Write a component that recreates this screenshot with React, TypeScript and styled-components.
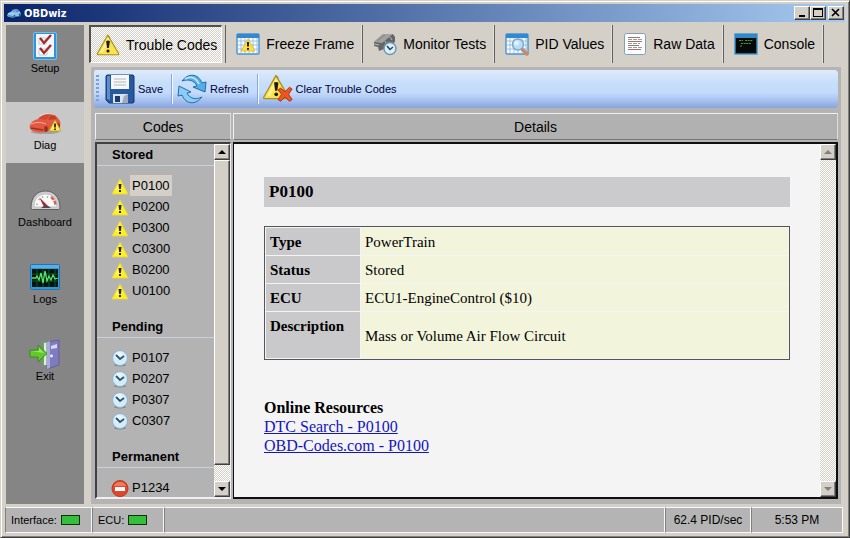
import React from "react";
import styled, { createGlobalStyle, css } from "styled-components";

const GlobalStyle = createGlobalStyle`
  * { box-sizing: border-box; }
  body { margin: 0; background: #d4d0c8; }
  button { font: inherit; color: inherit; margin: 0; padding: 0; border: 0; background: none; border-radius: 0; }
  svg { display: block; flex: none; }
`;

const checker = css`
  background-color: #ffffff;
  background-image: conic-gradient(#d4d0c8 25%, transparent 0 50%, #d4d0c8 0 75%, transparent 0);
  background-size: 2px 2px;
`;

const raised = css`
  background: #d4d0c8;
  border: 1px solid;
  border-color: #ffffff #404040 #404040 #ffffff;
  box-shadow: inset -1px -1px 0 #808080;
`;

const Window = styled.div`
  display: flex;
  flex-direction: column;
  height: 100vh;
  background: #d4d0c8;
  border: 1px solid;
  border-color: #d4d0c8 #404040 #404040 #d4d0c8;
  box-shadow: inset 1px 1px 0 #ffffff, inset -1px -1px 0 #808080;
  padding: 3px 4px 4px 3px;
  font-family: "Liberation Sans", Arial, sans-serif;
  font-size: 11px;
  color: #000000;
`;

const TitleBar = styled.header`
  display: flex;
  align-items: center;
  flex: none;
  height: 18px;
  padding: 0 1px 0 3px;
  gap: 3px;
  background: linear-gradient(90deg, #0a246a, #a6caf0);
  color: #ffffff;
`;

const WindowTitle = styled.h1`
  flex: 1;
  margin: 0;
  font: bold 11px "DejaVu Sans Condensed", "Liberation Sans", sans-serif;
`;

const CaptionButton = styled.button<{ $apart?: boolean }>`
  ${raised}
  width: 16px;
  height: 14px;
  margin-left: ${(p) => (p.$apart ? 2 : 0)}px;
`;

const CaptionGroup = styled.div`
  display: flex;
`;

const Body = styled.div`
  display: flex;
  flex: 1;
  min-height: 0;
  padding: 3px 0 3px 2px;
`;

const Sidebar = styled.nav`
  display: flex;
  flex-direction: column;
  gap: 16px;
  flex: none;
  width: 78px;
  background: #858585;
`;

const SideItem = styled.button<{ $active?: boolean }>`
  display: flex;
  flex-direction: column;
  align-items: center;
  height: 61px;
  padding-top: 5px;
  line-height: 12px;
  background: ${(p) => (p.$active ? "#c8c8c8" : "transparent")};
`;

const Main = styled.main`
  display: flex;
  flex-direction: column;
  flex: 1;
  min-width: 0;
  padding-left: 5px;
`;

const TabBar = styled.nav`
  display: flex;
  flex: none;
  height: 38px;
`;

const Tab = styled.button<{ $active?: boolean }>`
  display: flex;
  align-items: center;
  gap: 6px;
  padding: 0 8px 0 10px;
  font-size: 14px;
  white-space: nowrap;
  border-right: 1px solid #606060;
  box-shadow: inset -1px 0 0 #e4e2de;
  ${(p) =>
    p.$active &&
    css`
      ${checker}
      padding: 0 4px 0 5px;
      margin-right: 3px;
      border: 1px solid;
      border-width: 2px 1px 1px 2px;
      border-color: #505050 #ffffff #ffffff #505050;
      box-shadow: none;
    `}
`;

const TabDivider = styled.span`
  flex: none;
  width: 1px;
  background: #606060;
`;

const Workspace = styled.section`
  display: flex;
  flex-direction: column;
  flex: 1;
  min-height: 0;
  margin: 4px 4px 0 2px;
  padding: 3px 3px 5px;
  gap: 5px;
  background: #b5b4b4;
`;

const Toolbar = styled.div`
  display: flex;
  align-items: center;
  flex: none;
  height: 38px;
  padding: 0 2px;
  border-radius: 2px 4px 4px 2px;
  background: linear-gradient(#dfebfb, #c8dffa 30%, #c3dafa 60%, #aac4f2 78%, #88a4dc);
`;

const Grip = styled.span`
  width: 3px;
  height: 28px;
  margin-right: 6px;
  background: repeating-linear-gradient(#7f9fd6 0 2px, transparent 2px 4px);
`;

const ToolButton = styled.button`
  display: flex;
  align-items: center;
  gap: 3px;
  height: 32px;
  color: #000040;
`;

const ToolSeparator = styled.span`
  width: 2px;
  height: 30px;
  margin: 0 4px 0 8px;
  background: linear-gradient(90deg, #8aa8dc 50%, #f4f8ff 50%);
`;

const Columns = styled.div`
  display: grid;
  grid-template-columns: 136px minmax(0, 1fr);
  grid-template-rows: 27px minmax(0, 1fr);
  gap: 2px;
  flex: 1;
  min-height: 0;
  padding-left: 1px;
`;

const ColumnTitle = styled.h2`
  margin: 0;
  font-size: 14px;
  font-weight: normal;
  line-height: 26px;
  text-align: center;
  background: #b2b1b1;
  border: 1px solid;
  border-color: #f0f0f0 #dddddd #777777 #f0f0f0;
`;

const Pane = styled.div<{ $light?: boolean }>`
  display: flex;
  min-height: 0;
  overflow: hidden;
  background: ${(p) => (p.$light ? "#f4f4f4" : "#b3b3b3")};
  border: 2px solid;
  border-color: ${(p) => (p.$light ? "#101010" : "#404040 #f0f0f0 #f0f0f0 #404040")};
  border-width: ${(p) => (p.$light ? "2px 2px 2px 1px" : "2px 1px 2px 2px")};
`;

const PaneContent = styled.div`
  flex: 1;
  min-width: 0;
  overflow: hidden;
`;

const Group = styled.section`
  margin-bottom: 15px;
  font-size: 13px;
`;

const GroupTitle = styled.h3`
  margin: 0 0 9px;
  padding-left: 15px;
  height: 22px;
  font-size: 13px;
  line-height: 21px;
  border-bottom: 1px solid #ccd0dc;
`;

const CodeList = styled.ul`
  list-style: none;
  margin: 0;
  padding: 0 0 0 14px;
`;

const CodeRow = styled.li`
  height: 21px;
`;

const CodeButton = styled.button<{ $selected?: boolean }>`
  display: flex;
  align-items: center;
  gap: 1px;
  height: 21px;

  span {
    padding: 0 2px;
    line-height: 21px;
    background: ${(p) => (p.$selected ? "#d4d0c8" : "transparent")};
  }
`;

const ScrollTrack = styled.div`
  ${checker}
  display: flex;
  flex-direction: column;
  justify-content: space-between;
  flex: none;
  width: 16px;
`;

const ScrollButton = styled.button`
  ${raised}
  display: grid;
  place-items: center;
  flex: none;
  width: 16px;
  height: 16px;
`;

const ScrollThumb = styled.div`
  ${raised}
  flex: 1;
  margin-bottom: 16px;
`;

const Document = styled.article`
  padding: 33px 30px 0 30px;
  font: 15px/19px "Liberation Serif", "Times New Roman", serif;
`;

const CodeHeading = styled.h2`
  margin: 0;
  padding-left: 5px;
  font-size: 17px;
  line-height: 30px;
  background: #cbcbcd;
`;

const FactTable = styled.table`
  width: 100%;
  margin: 19px 0 38px;
  border: 1px solid #555555;
  border-spacing: 1px;

  th, td {
    height: 27px;
    padding: 5px 4px 3px;
    text-align: left;
  }
  th {
    width: 94px;
    vertical-align: top;
    background: #c9c9cb;
  }
  td { background: #f3f4dc; }
  tr:last-child td { height: 46px; }
`;

const Resources = styled.section`
  font-size: 16px;

  h3 { margin: 0; font-size: 16px; }
  a { display: table; color: #1414c0; }
`;

const StatusBar = styled.footer`
  display: flex;
  flex: none;
  height: 26px;
  padding: 0 2px 0 1px;
`;

const StatusCell = styled.div<{ $width?: number; $centered?: boolean }>`
  display: flex;
  align-items: center;
  justify-content: ${(p) => (p.$centered ? "center" : "flex-start")};
  gap: 4px;
  flex: ${(p) => (p.$width ? `0 0 ${p.$width}px` : "1")};
  padding: 0 5px;
  font-size: ${(p) => (p.$centered ? 12 : 11)}px;
  background: #b5b4b4;
  border: 1px solid;
  border-color: #f8f8f8 #f8f8f8 #f8f8f8 #808080;
`;

const Led = styled.span`
  width: 19px;
  height: 10px;
  border: 1px solid #103010;
  background: #35bd3c;
`;

const CarShape = ({ body, dark }: { body: string; dark: string }) => (
  <>
    <ellipse cx="16" cy="25" rx="14" ry="2" fill="#000" opacity=".2" />
    <path d="M1 18c1-3 4-5 8-6 3-4 8-6 14-5 4 1 6 4 8 7 1 3 0 6-1 8l-8 1-6 2c-5 1-10 0-14-2-1-1-2-3-1-5z" fill={body} />
    <path d="M9 12c3-3 7-5 12-4l-4 5c-3-1-6-1-8-1z" fill={dark} opacity=".35" />
    <path d="M22 8c3 0 5 2 6 4l-9 1z" fill={dark} opacity=".6" />
    <path d="M11 9c4-3 9-3 14-1" stroke="#fff" strokeOpacity=".45" fill="none" />
    <path d="M2 17c5-2 10-2 15 0" stroke="#fff" strokeOpacity=".5" fill="none" />
    <path d="M2 21l12 2" stroke={dark} strokeWidth="1.500" />
    <ellipse cx="17" cy="22" rx="2" ry="3" fill={dark} />
    <ellipse cx="29" cy="19" rx="2" ry="3" fill={dark} />
  </>
);

const LogoIcon = () => (
  <svg width="14" height="13" viewBox="0 4 32 24">
    <CarShape body="#8fc4f0" dark="#21578f" />
  </svg>
);

const TriangleShape = () => (
  <>
    <path d="M16 3.500L30 27q1 2-1 2H3q-2 0-1-2L15 4q1-1.500 2 0z" fill="#fbe44a" stroke="#a98e28" strokeWidth="1.500" />
    <path d="M16 6L5 26h4L18 9z" fill="#fff" opacity=".4" />
    <path d="M13.500 11q2.500-2 5 0l-1.300 9h-2.400z" fill="#221c05" />
    <circle cx="16" cy="24" r="2.100" fill="#221c05" />
  </>
);

const WarningIcon = () => (
  <svg width="24" height="24" viewBox="0 0 32 32">
    <TriangleShape />
  </svg>
);

const SmallWarningIcon = () => (
  <svg width="18" height="18" viewBox="0 0 18 18">
    <path d="M9 2l8 15H1z" fill="#fff21c" stroke="#e5d44c" strokeWidth="1" strokeLinejoin="round" />
    <path d="M9 4l-5 9h4z" fill="#fff" opacity=".35" />
    <path d="M7.500 7h3l-.6 5H8.100z" fill="#2c2606" />
    <rect x="8" y="13" width="2" height="2" fill="#2c2606" />
  </svg>
);

const ClockIcon = () => (
  <svg width="18" height="18" viewBox="0 0 18 18">
    <ellipse cx="9" cy="16" rx="6" ry="1.500" fill="#7b8790" />
    <circle cx="9" cy="9" r="7.500" fill="#d4ebf8" stroke="#91b3ca" />
    <circle cx="8" cy="7" r="4" fill="#fff" opacity=".5" />
    <path d="M5 6l4 4 4-3" fill="none" stroke="#2a5470" strokeWidth="1.800" />
  </svg>
);

const StopIcon = () => (
  <svg width="18" height="18" viewBox="0 0 18 18">
    <circle cx="9" cy="9.500" r="8" fill="#e2472a" stroke="#b9381f" />
    <path d="M3 7a6.500 6.500 0 0 1 12 0z" fill="#ff9d80" opacity=".6" />
    <rect x="4" y="8" width="10" height="4" fill="#fff" />
  </svg>
);

const SetupIcon = () => (
  <svg width="32" height="32" viewBox="0 0 32 32">
    <rect x="4.500" y="2.500" width="23" height="27" rx="1.500" fill="#2f95d6" stroke="#77bce8" />
    <rect x="7" y="4" width="18" height="23" fill="#f3f6fa" />
    <path d="M10 19h8v6h-8zM10 8h7v6h-7z" fill="#fff" stroke="#c3cad2" />
    <path d="M11 8l4 5 7-8M11 18l4 5 7-8" fill="none" stroke="#a52a2a" strokeWidth="2.400" />
  </svg>
);

const DiagIcon = () => (
  <svg width="32" height="32" viewBox="0 0 32 32">
    <CarShape body="#e5573e" dark="#9c3322" />
    <path d="M26 13l6 11H20z" fill="#ffec4a" stroke="#b89d28" strokeWidth=".8" />
    <path d="M26 16.500v4M26 21.500v1.500" stroke="#2b2100" strokeWidth="1.800" />
  </svg>
);

const GaugeIcon = () => (
  <svg width="32" height="32" viewBox="0 0 32 32">
    <path d="M2 24C2 13 8 7 16.500 7S31 13 31 24q0 1.500-1.500 1.500h-26Q2 25.500 2 24z" fill="#cfcfcf" stroke="#5d5d5d" />
    <path d="M5 23c0-9 5-13 11.500-13S28 14 28 23z" fill="#fafafa" stroke="#c1c1c1" />
    <path d="M7 20l2 .5M9 15l2 1M13 12l1 2M19 12l-1 2" stroke="#999" />
    <path d="M22 13q4 3 4.500 8" stroke="#d06452" strokeWidth="2.500" fill="none" strokeDasharray="4 1" />
    <path d="M10 13l10 10h-5z" fill="#b22430" />
    <path d="M12 24q5-5 10 0z" fill="#4b4b55" />
  </svg>
);

const LogsIcon = () => (
  <svg width="32" height="32" viewBox="0 0 32 32">
    <rect x="1.500" y="3.500" width="29" height="25" rx="1" fill="#3495d8" stroke="#1e74b5" />
    <rect x="2" y="4" width="28" height="3" fill="#56b1ea" />
    <rect x="3" y="8" width="26" height="18" fill="#03140a" />
    <path d="M3 13h26M3 20h26M8 8v18M14 8v18M20 8v18M26 8v18" stroke="#12562a" />
    <path d="M3 17h4l1-2 2 4 2-7 2 10 2-12 2 10 2-5 2 4 2-5 2 4 3-1" fill="none" stroke="#53e56b" strokeWidth="1.300" />
  </svg>
);

const ExitIcon = () => (
  <svg width="32" height="32" viewBox="0 0 32 32">
    <path d="M13 3l16-1v25l-16 1z" fill="#6f9a7c" />
    <path d="M15 5l6-1v23h-6z" fill="#d8f5c8" />
    <path d="M18 4l12-2v25l-12 4z" fill="#7f7bc0" stroke="#5b5798" strokeWidth=".8" />
    <path d="M18 4l3-1v27l-3 1z" fill="#aaa8da" />
    <path d="M22 8l6-2v4l-6 1z" fill="#d8d9f0" />
    <circle cx="22.500" cy="18" r="1.400" fill="#f3f3fa" />
    <path d="M1 12h8V7l9 8.500L9 24v-5H1z" fill="#62c92c" stroke="#388e16" />
    <path d="M2 13h8v-3l5 5z" fill="#b8f088" opacity=".7" />
  </svg>
);

const CalendarShape = () => (
  <>
    <rect x="1" y="2" width="22" height="20" rx="1" fill="#f7fbff" stroke="#4a93cf" strokeWidth="1.400" />
    <rect x="1" y="2" width="22" height="4" fill="#3289cf" />
    <path d="M5 6v15M9 6v15M13 6v15M17 6v15M21 6v15M2 9h20M2 13h20M2 17h20" stroke="#8ab8de" strokeWidth=".8" />
  </>
);

const FreezeIcon = () => (
  <svg width="24" height="24" viewBox="0 0 24 24">
    <CalendarShape />
    <path d="M12 7l7 12H5z" fill="#ffe03e" stroke="#d5b52b" strokeWidth=".8" />
    <path d="M12 10v4.500M12 16v1.800" stroke="#282006" strokeWidth="2" />
  </svg>
);

const MonitorIcon = () => (
  <svg width="24" height="24" viewBox="0 0 24 24">
    <path d="M1 10L10 2h10l2 3v5L11 17l-5 2-1-4-4-1z" fill="#666" />
    <path d="M1 10L10 2h10L9 11z" fill="#a2a2a2" />
    <path d="M4 9l8-6" stroke="#858585" />
    <path d="M1 12l5 1M12 9l2 4M17 5l2 3" stroke="#b9b9b9" />
    <circle cx="17" cy="16.500" r="6" fill="#deeff8" stroke="#6c94ad" strokeWidth="1.400" />
    <path d="M14 14l3 3.500 3-2.500" fill="none" stroke="#23485f" strokeWidth="1.600" />
  </svg>
);

const PidIcon = () => (
  <svg width="24" height="24" viewBox="0 0 24 24">
    <CalendarShape />
    <path d="M17 17l5 5" stroke="#c98962" strokeWidth="3.500" strokeLinecap="round" />
    <circle cx="13" cy="12.500" r="5.500" fill="#b8ddf6" stroke="#7ba7c8" strokeWidth="1.400" />
    <circle cx="11.500" cy="11" r="2.500" fill="#fff" opacity=".6" />
  </svg>
);

const RawIcon = () => (
  <svg width="24" height="24" viewBox="0 0 24 24">
    <rect x="1.500" y="1.500" width="21" height="21" rx="2" fill="#fdfdfd" stroke="#7fa0bd" />
    <path d="M5 5.500h12M5 9.500h14M5 13.500h11M5 17.500h13" stroke="#a07468" />
    <path d="M5 7.500h14M5 11.500h12M5 15.500h14" stroke="#9a9aa0" strokeDasharray="4 1" />
  </svg>
);

const ConsoleIcon = () => (
  <svg width="24" height="24" viewBox="0 0 24 24">
    <rect x="1" y="2" width="22" height="20" fill="#050a08" stroke="#3a94cf" strokeWidth="1.400" />
    <rect x="1" y="2" width="22" height="4" fill="#3189c8" />
    <path d="M5 8.500h4M11 8.500h8M7 11.500h10M6 14h2" stroke="#469a3d" strokeWidth="1.200" strokeDasharray="2 .6" />
  </svg>
);

const SaveIcon = () => (
  <svg width="30" height="30" viewBox="0 0 30 30">
    <path d="M2 1h26l1 1v26l-1 1H4l-3-3V2z" fill="#28589e" stroke="#153968" />
    <path d="M2 2h3v24l-3-1z" fill="#5c8dcc" />
    <path d="M6 1h18v14H6z" fill="#f5f7f8" />
    <path d="M9 5h12M9 8h12M9 11h12" stroke="#b2b8bd" />
    <path d="M8 20h15v9H8z" fill="#d9e3ee" />
    <path d="M10 22h5v6h-5z" fill="#173c70" />
    <path d="M19 22l4-2v9h-6z" fill="#9cabc0" />
  </svg>
);

const RefreshIcon = () => (
  <svg width="30" height="30" viewBox="0 0 30 30" strokeLinejoin="round">
    <path d="M5 7C11-1 21-1 25 9l4-1-1 10-12-5 4-1C17 6 11 5 5 7z" fill="#56aee8" stroke="#2369ad" />
    <path d="M25 23C19 31 9 31 5 21l-4 1 1-10 12 6-4 1c3 6 9 7 15 4z" fill="#8ccdf4" stroke="#2369ad" />
    <path d="M8 5q9-5 14 5" fill="none" stroke="#c8eafd" strokeWidth="1.500" />
  </svg>
);

const ClearIcon = () => (
  <svg width="30" height="30" viewBox="0 0 34 32">
    <g transform="translate(-1 -2)">
      <TriangleShape />
    </g>
    <path d="M20 15l5 4 5-5 3 2-4 6 4 6-3 2-5-5-5 5-3-2 4-6-4-5z" fill="#ef5422" stroke="#a52c0c" />
  </svg>
);

const Arrow = ({ down, dim }: { down?: boolean; dim?: boolean }) => (
  <svg width="8" height="4" viewBox="0 0 8 4">
    <path d={down ? "M0 0h8L4 4z" : "M0 4h8L4 0z"} fill={dim ? "#808080" : "#000"} />
  </svg>
);

const ScrollBar = ({ active, name }: { active?: boolean; name: string }) => (
  <ScrollTrack>
    <ScrollButton aria-label={`Scroll ${name} up`} disabled={!active}>
      <Arrow dim={!active} />
    </ScrollButton>
    {active && <ScrollThumb />}
    <ScrollButton aria-label={`Scroll ${name} down`} disabled={!active}>
      <Arrow down dim={!active} />
    </ScrollButton>
  </ScrollTrack>
);

const sideItems = [
  { label: "Setup", icon: <SetupIcon /> },
  { label: "Diag", icon: <DiagIcon />, active: true },
  { label: "Dashboard", icon: <GaugeIcon /> },
  { label: "Logs", icon: <LogsIcon /> },
  { label: "Exit", icon: <ExitIcon /> },
];

const tabs = [
  { label: "Freeze Frame", icon: <FreezeIcon /> },
  { label: "Monitor Tests", icon: <MonitorIcon /> },
  { label: "PID Values", icon: <PidIcon /> },
  { label: "Raw Data", icon: <RawIcon /> },
  { label: "Console", icon: <ConsoleIcon /> },
];

const groups = [
  { title: "Stored", icon: <SmallWarningIcon />, codes: ["P0100", "P0200", "P0300", "C0300", "B0200", "U0100"] },
  { title: "Pending", icon: <ClockIcon />, codes: ["P0107", "P0207", "P0307", "C0307"] },
  { title: "Permanent", icon: <StopIcon />, codes: ["P1234"] },
];

const facts = [
  ["Type", "PowerTrain"],
  ["Status", "Stored"],
  ["ECU", "ECU1-EngineControl ($10)"],
  ["Description", "Mass or Volume Air Flow Circuit"],
];

export default function App() {
  return (
    <>
      <GlobalStyle />
      <Window>
        <TitleBar>
          <LogoIcon />
          <WindowTitle>OBDwiz</WindowTitle>
          <CaptionGroup>
            <CaptionButton aria-label="Minimize">
              <svg width="14" height="12" viewBox="0 0 14 12"><path d="M4 8h6v2H4z" /></svg>
            </CaptionButton>
            <CaptionButton aria-label="Maximize">
              <svg width="14" height="12" viewBox="0 0 14 12">
                <path d="M2 1h10v9H2zM3 3v6h8V3z" fillRule="evenodd" />
              </svg>
            </CaptionButton>
            <CaptionButton aria-label="Close" $apart>
              <svg width="14" height="12" viewBox="0 0 14 12">
                <path d="M3 2l7 7M10 2L3 9" stroke="#000" strokeWidth="1.700" />
              </svg>
            </CaptionButton>
          </CaptionGroup>
        </TitleBar>
        <Body>
          <Sidebar>
            {sideItems.map((item) => (
              <SideItem key={item.label} $active={item.active}>
                {item.icon}
                {item.label}
              </SideItem>
            ))}
          </Sidebar>
          <Main>
            <TabBar>
              <Tab $active>
                <WarningIcon />
                Trouble Codes
              </Tab>
              <TabDivider />
              {tabs.map((tab) => (
                <Tab key={tab.label}>
                  {tab.icon}
                  {tab.label}
                </Tab>
              ))}
            </TabBar>
            <Workspace>
              <Toolbar>
                <Grip />
                <ToolButton><SaveIcon />Save</ToolButton>
                <ToolSeparator />
                <ToolButton><RefreshIcon />Refresh</ToolButton>
                <ToolSeparator />
                <ToolButton><ClearIcon />Clear Trouble Codes</ToolButton>
              </Toolbar>
              <Columns>
                <ColumnTitle>Codes</ColumnTitle>
                <ColumnTitle>Details</ColumnTitle>
                <Pane>
                  <PaneContent>
                    {groups.map((group) => (
                      <Group key={group.title}>
                        <GroupTitle>{group.title}</GroupTitle>
                        <CodeList>
                          {group.codes.map((code) => (
                            <CodeRow key={code}>
                              <CodeButton $selected={code === "P0100"}>
                                {group.icon}
                                <span>{code}</span>
                              </CodeButton>
                            </CodeRow>
                          ))}
                        </CodeList>
                      </Group>
                    ))}
                  </PaneContent>
                  <ScrollBar active name="codes" />
                </Pane>
                <Pane $light>
                  <PaneContent>
                    <Document>
                      <CodeHeading>P0100</CodeHeading>
                      <FactTable>
                        <tbody>
                          {facts.map(([name, value]) => (
                            <tr key={name}>
                              <th scope="row">{name}</th>
                              <td>{value}</td>
                            </tr>
                          ))}
                        </tbody>
                      </FactTable>
                      <Resources>
                        <h3>Online Resources</h3>
                        <a href="#dtc-search">DTC Search - P0100</a>
                        <a href="#obd-codes">OBD-Codes.com - P0100</a>
                      </Resources>
                    </Document>
                  </PaneContent>
                  <ScrollBar name="details" />
                </Pane>
              </Columns>
            </Workspace>
          </Main>
        </Body>
        <StatusBar>
          <StatusCell $width={87}>Interface: <Led /></StatusCell>
          <StatusCell $width={72}>ECU: <Led /></StatusCell>
          <StatusCell />
          <StatusCell $width={86} $centered>62.4 PID/sec</StatusCell>
          <StatusCell $width={92} $centered>5:53 PM</StatusCell>
        </StatusBar>
      </Window>
    </>
  );
}
